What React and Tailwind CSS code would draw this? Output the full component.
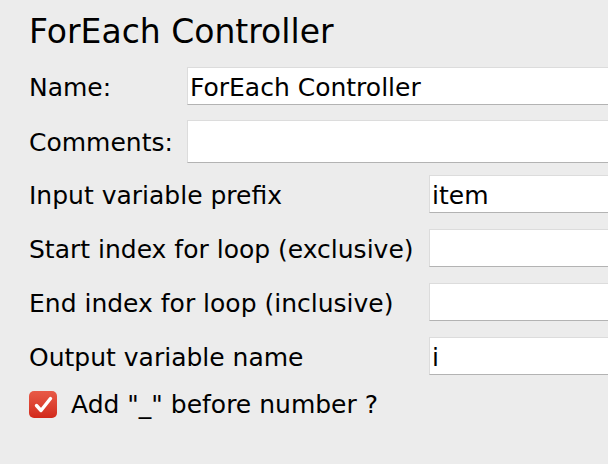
import React from 'react';

// Text field styled like an Aqua input: white, faint edges, darker bottom line.
const Field = ({ value, className = '' }) => (
  <div
    className={`flex items-center bg-white border border-[#dcdcdc] border-b-[#b3b3b3] pl-[2px] pt-[3px] text-[25px] leading-[30px] text-black whitespace-nowrap ${className}`}
  >
    {value}
  </div>
);

const Row = ({ label, value, labelWidth, height = 'h-[38px]' }) => (
  <div className="flex items-center">
    <div className={`${labelWidth} shrink-0 pt-[3px] text-[25px] leading-[30px] text-black whitespace-nowrap`}>
      {label}
    </div>
    <Field value={value} className={`${height} flex-1 -mr-[20px]`} />
  </div>
);

const loopRows = [
  { label: 'Input variable prefix', value: 'item' },
  { label: 'Start index for loop (exclusive)', value: '' },
  { label: 'End index for loop (inclusive)', value: '' },
  { label: 'Output variable name', value: 'i' },
];

export default function App() {
  return (
    <div
      className="w-[608px] h-[464px] overflow-hidden bg-[#ececec] pl-[29px] pt-[13px]"
      style={{ fontFamily: '"DejaVu Sans", "Liberation Sans", sans-serif' }}
    >
      <h1 className="text-[33px] leading-[38px] text-black">ForEach Controller</h1>

      {/* name / comments group */}
      <div className="mt-[16px] flex flex-col gap-[15px]">
        <Row label="Name:" value="ForEach Controller" labelWidth="w-[158px]" />
        <Row label="Comments:" value="" labelWidth="w-[158px]" height="h-[43px]" />
      </div>

      {/* loop settings */}
      <div className="mt-[12px] flex flex-col gap-[16px]">
        {loopRows.map(row => (
          <Row key={row.label} label={row.label} value={row.value} labelWidth="w-[400px]" />
        ))}
      </div>

      <div className="mt-[11px] flex items-center gap-[14px]">
        <div className="w-[28px] h-[27px] rounded-[5px] bg-gradient-to-b from-[#e85a48] to-[#d2281a] flex items-center justify-center">
          <svg width="19" height="17" viewBox="0 0 19 17" fill="none">
            <path d="M2.5 9.5 L7 14.5 L16.5 2.5" stroke="white" strokeWidth="3.4" strokeLinecap="round" strokeLinejoin="round" />
          </svg>
        </div>
        <span className="text-[25px] text-black">Add "_" before number ?</span>
      </div>
    </div>
  );
}
